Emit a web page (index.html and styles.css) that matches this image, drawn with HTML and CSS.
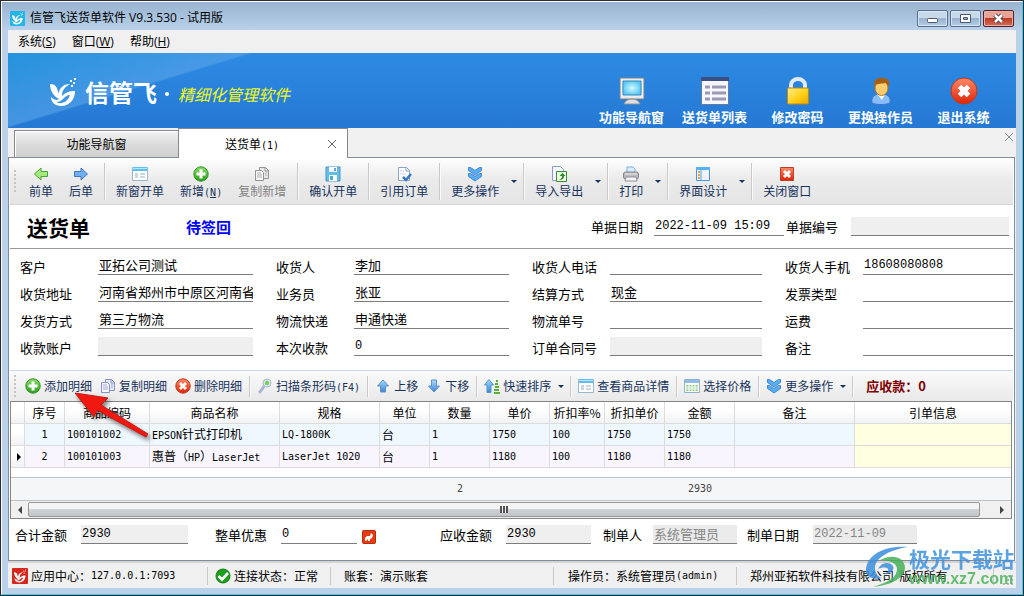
FILE: index.html
```
<!DOCTYPE html>
<html lang="zh-CN">
<head>
<meta charset="utf-8">
<title>信管飞送货单软件 V9.3.530 - 试用版</title>
<link rel="stylesheet" href="styles.css">
</head>
<body>
<svg class="defs" aria-hidden="true">
  <defs>
    <linearGradient id="gGreen" x1="0" y1="0" x2="0" y2="1"><stop offset="0" stop-color="#8ede6a"/><stop offset="1" stop-color="#2a9c1c"/></linearGradient>
    <linearGradient id="gRed" x1="0" y1="0" x2="0" y2="1"><stop offset="0" stop-color="#ff8a68"/><stop offset="1" stop-color="#dc2408"/></linearGradient>
    <linearGradient id="gBlue" x1="0" y1="0" x2="0" y2="1"><stop offset="0" stop-color="#a8dcfc"/><stop offset="1" stop-color="#3d82d0"/></linearGradient>
    <linearGradient id="gGold" x1="0" y1="0" x2="1" y2="1"><stop offset="0" stop-color="#fff08a"/><stop offset=".6" stop-color="#ffcc10"/><stop offset="1" stop-color="#e8a400"/></linearGradient>
    <radialGradient id="gScreen"><stop offset="0" stop-color="#d8fbff"/><stop offset="1" stop-color="#5cc8f8"/></radialGradient>
    <symbol id="bird" viewBox="0 0 26 28">
      <path d="M0 6 C5 6 8 9 8 16 C10 9 14 6 20 6 C15 9 12 12 12 18 C16 14 20 13 25 13 C25 21 20 28 11 28 C5 28 1 24 1 19 C4 22 7 23 9 21 C3 18 0 12 0 6 Z M20 17 C17 17 15 19 13 21 C11 23 9 24 6 24 C11 27 18 24 20 17 Z" fill-rule="evenodd"/>
      <path d="M20 2h2v2h-2zM24 0h2v2h-2zM23 4h2v2h-2zM21 7h2v2h-2z"/>
    </symbol>
    <symbol id="i-add" viewBox="0 0 16 16"><circle cx="8" cy="8" r="7.2" fill="url(#gGreen)" stroke="#2d9424"/><path d="M8 3.5v9M3.5 8h9" stroke="#fff" stroke-width="3"/></symbol>
    <symbol id="i-del" viewBox="0 0 16 16"><circle cx="8" cy="8" r="7.2" fill="url(#gRed)" stroke="#c4381c"/><path d="M5 5l6 6M11 5l-6 6" stroke="#fff" stroke-width="2.8"/></symbol>
    <symbol id="i-left" viewBox="0 0 16 16"><path d="M1.500 8L8 2v3.500h6.500v5H8V14z" fill="#a5e87c" stroke="#4aa336"/></symbol>
    <symbol id="i-right" viewBox="0 0 16 16"><path d="M14.500 8L8 2v3.500H1.500v5H8V14z" fill="#70b0f0" stroke="#4878b8"/></symbol>
    <symbol id="i-up" viewBox="0 0 16 16"><path d="M8 2L13.500 8h-3v6h-5V8h-3z" fill="url(#gBlue)" stroke="#5a94d2"/></symbol>
    <symbol id="i-down" viewBox="0 0 16 16"><path d="M8 14L13.500 8h-3V2h-5v6h-3z" fill="url(#gBlue)" stroke="#5a94d2"/></symbol>
    <symbol id="i-form" viewBox="0 0 16 16"><path d="M.5 1.500h15v13H.5z" fill="#fff" stroke="#92b8d2"/><path d="M1 1h14v4H1z" fill="#5ebff0"/><path d="M1 2h14v1H1z" fill="#b4e6ff"/><path d="M3 7h3v5H3z" fill="#ccd6e2"/><path d="M8 8h5M8 11h5" stroke="#9eaebe"/></symbol>
    <symbol id="i-copy" viewBox="0 0 16 16"><path d="M5.500 1.500h6l3 3v8h-9z" fill="#e4e8fa" stroke="#8793c4"/><path d="M1.500 4.500h6l2 2v8h-8z" fill="#f4f6ff" stroke="#8793c4"/><path d="M3 7h4M3 9h5M3 11h5M11 7h2M11 9h2" stroke="#a4add2"/><path d="M11 1v4h4" fill="none" stroke="#8793c4"/></symbol>
    <symbol id="i-save" viewBox="0 0 16 16"><path d="M1 1h14v14H1z" fill="#62bdea" stroke="#4797c8"/><path d="M4 1h8v5H4zM4 9h8v6H4z" fill="#fff"/><path d="M9 2h2v3H9zM5 10h3v4H5z" fill="#57a8d8"/></symbol>
    <symbol id="i-ref" viewBox="0 0 16 16"><path d="M2.500 1.500h8l3 3v10h-11z" fill="#fbfcff" stroke="#8fa3c8"/><path d="M10 1v4h4" fill="none" stroke="#8fa3c8"/><path d="M4 5h4M4 8h6" stroke="#ccd4e6"/><path d="M7 11l3 3 5-6" fill="none" stroke="#3777c4" stroke-width="2.500"/></symbol>
    <symbol id="i-more" viewBox="0 0 16 16"><path d="M1.500 1.500h2L8 4.500l4.500-3h2v3L8 9 1.500 4.500zM1.500 7.500h2L8 10.500l4.500-3h2v3L8 15 1.500 10.500z" fill="#58adf0" stroke="#4488d2"/></symbol>
    <symbol id="i-export" viewBox="0 0 16 16"><path d="M1.500.5h8l3 3v11h-11z" fill="#f4f7ff" stroke="#8a9cc6"/><path d="M5.500 5.500h10v10h-10z" fill="#effbe8" stroke="#33922e"/><path d="M8 14c3-1 3-3 3-4H8.500L11.500 7l3 3H13c0 3-2 4-5 4z" fill="#259020"/></symbol>
    <symbol id="i-print" viewBox="0 0 16 16"><path d="M4 7V1h6l2 2v4z" fill="#d6edff" stroke="#7eb4e2"/><rect x=".5" y="6" width="15" height="7" rx="2" fill="#b8b8bc" stroke="#85858b"/><path d="M2 8h12" stroke="#efefef"/><path d="M3 11h10l1 4H2z" fill="#f5f5f5" stroke="#929298"/></symbol>
    <symbol id="i-design" viewBox="0 0 16 16"><path d="M1.500 1.500h13v13h-13z" fill="#f1f1ff" stroke="#3a9be8"/><path d="M1 1h14v3H1z" fill="#55b2f5"/><path d="M6 4v10" stroke="#48a4ec"/><path d="M3 5h2v2H3zM3 8h2v2H3zM3 11h2v2H3z" fill="#eda338"/></symbol>
    <symbol id="i-close" viewBox="0 0 16 16"><path d="M1.500 1.500h13v13h-13z" fill="url(#gRed)" stroke="#bd3e25"/><path d="M5 5l6 6M11 5l-6 6" stroke="#fff" stroke-width="3"/></symbol>
    <symbol id="i-scan" viewBox="0 0 16 16"><path d="M3 14l5-7" stroke="#a9b3d2" stroke-width="3" stroke-linecap="round"/><circle cx="10" cy="5" r="4" fill="#dce8f4" stroke="#a9b9d4"/><circle cx="10" cy="5" r="2.200" fill="#7bd04c"/></symbol>
    <symbol id="i-sort" viewBox="0 0 16 16"><path d="M5 1.500L9.500 7H7v7.500H3V7H.5z" fill="url(#gBlue)" stroke="#4a9ad8"/><path d="M12 3h2M11 6h3M11 9h4M10 12h5M10 15h6" stroke="#57b038" stroke-width="2"/></symbol>
    <symbol id="i-price" viewBox="0 0 16 16"><path d="M.5 1.500h15v13H.5z" fill="#fff" stroke="#8fb2cc"/><path d="M1 2h14v3H1z" fill="#8fbfe6"/><path d="M2 7h12v6H2z" fill="#94cc80"/><path d="M2 9h12M2 11h12M5 7v6M8 7v6M11 7v6" stroke="#fff"/></symbol>
    <symbol id="i-ok" viewBox="0 0 16 16"><circle cx="8" cy="8" r="7" fill="#19a01c" stroke="#117d14"/><path d="M3.500 8l3.500 3.500 6-6.500" fill="none" stroke="#fff" stroke-width="2.600"/></symbol>
  </defs>
</svg>

<div class="window">
  <div class="frame">
    <header class="titlebar">
      <svg class="app-icon" viewBox="0 0 16 16"><rect width="16" height="16" rx="1" fill="#22b5ea"/><use href="#bird" x="2" y="1" width="12" height="14" fill="#fff"/></svg>
      <h1 class="caption">信管飞送货单软件 V9.3.530 - 试用版</h1>
      <div class="window-buttons">
        <button class="wbtn" aria-label="最小化"><svg viewBox="0 0 31 17"><rect x="10.500" y="8.500" width="10" height="4" rx="1" fill="#fff" stroke="#4b5870"/></svg></button>
        <button class="wbtn" aria-label="还原"><svg viewBox="0 0 31 17"><path d="M10.500 4.500h10v8h-10zM13.500 7.500h4v2h-4z" fill="#fff" fill-rule="evenodd" stroke="#4b5870"/></svg></button>
        <button class="wbtn wbtn-close" aria-label="关闭"><svg viewBox="0 0 31 17"><path d="M12 5l7 7M19 5l-7 7" stroke="#4b4552" stroke-width="4.500"/><path d="M12 5l7 7M19 5l-7 7" stroke="#fff" stroke-width="2.500"/></svg></button>
      </div>
    </header>

    <div class="client">
      <nav class="menubar">
        <button class="menu-item">系统(<u>S</u>)</button>
        <button class="menu-item">窗口(<u>W</u>)</button>
        <button class="menu-item">帮助(<u>H</u>)</button>
      </nav>

      <div class="banner">
        <div class="brand">
          <svg class="brand-mark"><use href="#bird" fill="#fff"/></svg>
          <span class="brand-name">信管飞</span>
          <span class="brand-dot"></span>
          <span class="brand-slogan">精细化管理软件</span>
        </div>
        <nav class="shortcuts">
          <button class="shortcut"><svg viewBox="0 0 28 28"><path d="M2 1h24v21H2z" fill="#ececec" stroke="#77828a"/><path d="M5 4h18v14H5z" fill="url(#gScreen)" stroke="#3288bd"/><path d="M6 27c1-3 4-5 8-5s7 2 8 5z" fill="#e0e0e0" stroke="#929292"/></svg>功能导航窗</button>
          <button class="shortcut"><svg viewBox="0 0 28 28"><path d="M.5.500h27v27H.500z" fill="#f6f6fd" stroke="#66789e"/><path d="M0 0h28v4H0z" fill="#3d4f80"/><path d="M4 10h5M4 16h5M4 22h5M11 10h14M11 16h14M11 22h14" stroke="#9a9ab6" stroke-width="3"/></svg>送货单列表</button>
          <button class="shortcut"><svg viewBox="0 0 28 28"><path d="M7 12V8a7 6 0 0 1 14 0v4" fill="none" stroke="#e4eaf8" stroke-width="4"/><rect x="3.500" y="11" width="21" height="16" rx="1" fill="url(#gGold)" stroke="#b98b12"/></svg>修改密码</button>
          <button class="shortcut"><svg viewBox="0 0 28 28"><path d="M5 26c-1-6 2-8 6-9h6c4 1 7 3 6 9-4 2-14 2-18 0z" fill="#88bcf8" stroke="#3a74cc"/><path d="M10 17l5 6 3-6z" fill="#fff"/><ellipse cx="14.500" cy="11" rx="6.500" ry="7.500" fill="#ffcd70" stroke="#b87422"/><path d="M7 9C6 2 12 0 16 1c6 0 7 4 6 8-2-1-2-2-3-3-4 1-9 0-12 3z" fill="#a55f14"/></svg>更换操作员</button>
          <button class="shortcut"><svg viewBox="0 0 28 28"><circle cx="14" cy="14" r="13" fill="url(#gRed)" stroke="#c43818"/><path d="M9.500 9.500l9 9M18.500 9.500l-9 9" stroke="#fff" stroke-width="5"/></svg>退出系统</button>
        </nav>
      </div>

      <div class="tabs">
        <button class="tab">功能导航窗</button>
        <div class="tab tab-active"><button class="tab-label">送货单<span class="mono">(1)</span></button><button class="x" aria-label="关闭标签"><svg viewBox="0 0 8 8"><path d="M0 0l8 8M8 0L0 8"/></svg></button></div>
        <button class="x x-all" aria-label="关闭"><svg viewBox="0 0 8 8"><path d="M0 0l8 8M8 0L0 8"/></svg></button>
      </div>

      <main class="sheet">
        <div class="toolbar toolbar-main">
          <span class="grip"></span>
          <button class="tool"><svg><use href="#i-left"/></svg>前单</button>
          <button class="tool"><svg><use href="#i-right"/></svg>后单</button>
          <span class="sep"></span>
          <button class="tool"><svg><use href="#i-form"/></svg>新窗开单</button>
          <button class="tool"><svg><use href="#i-add"/></svg><span>新增<span class="mono">(<u>N</u>)</span></span></button>
          <button class="tool" disabled><svg><use href="#i-copy"/></svg>复制新增</button>
          <span class="sep"></span>
          <button class="tool"><svg><use href="#i-save"/></svg>确认开单</button>
          <span class="sep"></span>
          <button class="tool"><svg><use href="#i-ref"/></svg>引用订单</button>
          <span class="sep"></span>
          <button class="tool"><svg><use href="#i-more"/></svg>更多操作</button><button class="drop" aria-label="更多操作选项"></button>
          <span class="sep"></span>
          <button class="tool"><svg><use href="#i-export"/></svg>导入导出</button><button class="drop" aria-label="导入导出选项"></button>
          <span class="sep"></span>
          <button class="tool"><svg><use href="#i-print"/></svg>打印</button><button class="drop" aria-label="打印选项"></button>
          <span class="sep"></span>
          <button class="tool"><svg><use href="#i-design"/></svg>界面设计</button><button class="drop" aria-label="界面设计选项"></button>
          <span class="sep"></span>
          <button class="tool"><svg><use href="#i-close"/></svg>关闭窗口</button>
        </div>

        <div class="doc-head">
          <h2 class="doc-title">送货单</h2>
          <strong class="doc-state">待签回</strong>
          <label for="f-date">单据日期</label>
          <input id="f-date" class="field latin w-date" value="2022-11-09 15:09">
          <label for="f-no">单据编号</label>
          <input id="f-no" class="field w-no" readonly>
        </div>

        <form class="doc-form">
          <div class="pair"><label for="a1">客户</label><input id="a1" class="field" value="亚拓公司测试"></div>
          <div class="pair"><label for="a2">收货人</label><input id="a2" class="field" value="李加"></div>
          <div class="pair"><label for="a3">收货人电话</label><input id="a3" class="field"></div>
          <div class="pair"><label for="a4">收货人手机</label><input id="a4" class="field latin" value="18608080808"></div>
          <div class="pair"><label for="b1">收货地址</label><input id="b1" class="field" value="河南省郑州市中原区河南省"></div>
          <div class="pair"><label for="b2">业务员</label><input id="b2" class="field" value="张亚"></div>
          <div class="pair"><label for="b3">结算方式</label><input id="b3" class="field" value="现金"></div>
          <div class="pair"><label for="b4">发票类型</label><input id="b4" class="field"></div>
          <div class="pair"><label for="c1">发货方式</label><input id="c1" class="field" value="第三方物流"></div>
          <div class="pair"><label for="c2">物流快递</label><input id="c2" class="field" value="申通快递"></div>
          <div class="pair"><label for="c3">物流单号</label><input id="c3" class="field"></div>
          <div class="pair"><label for="c4">运费</label><input id="c4" class="field"></div>
          <div class="pair"><label for="d1">收款账户</label><input id="d1" class="field" readonly></div>
          <div class="pair"><label for="d2">本次收款</label><input id="d2" class="field latin" value="0"></div>
          <div class="pair"><label for="d3">订单合同号</label><input id="d3" class="field" readonly></div>
          <div class="pair"><label for="d4">备注</label><input id="d4" class="field"></div>
        </form>

        <div class="toolbar toolbar-rows">
          <span class="grip"></span>
          <button class="tool"><svg><use href="#i-add"/></svg>添加明细</button>
          <button class="tool"><svg><use href="#i-copy"/></svg>复制明细</button>
          <button class="tool"><svg><use href="#i-del"/></svg>删除明细</button>
          <span class="sep"></span>
          <button class="tool"><svg><use href="#i-scan"/></svg><span>扫描条形码<span class="mono">(F4)</span></span></button>
          <span class="sep"></span>
          <button class="tool"><svg><use href="#i-up"/></svg>上移</button>
          <button class="tool"><svg><use href="#i-down"/></svg>下移</button>
          <span class="sep"></span>
          <button class="tool"><svg><use href="#i-sort"/></svg>快速排序</button><button class="drop" aria-label="排序选项"></button>
          <span class="sep"></span>
          <button class="tool"><svg><use href="#i-form"/></svg>查看商品详情</button>
          <span class="sep"></span>
          <button class="tool"><svg><use href="#i-price"/></svg>选择价格</button>
          <span class="sep"></span>
          <button class="tool"><svg><use href="#i-more"/></svg>更多操作</button><button class="drop" aria-label="明细更多操作"></button>
          <span class="sep"></span>
          <strong class="due">应收款：0</strong>
        </div>

        <div class="grid">
          <table>
            <colgroup><col class="c14"><col class="c40"><col class="c85"><col class="c130"><col class="c100"><col class="c50"><col class="c60"><col class="c60"><col class="c55"><col class="c60"><col class="c70"><col class="c120"><col></colgroup>
            <thead><tr><th></th><th>序号</th><th>商品编码</th><th>商品名称</th><th>规格</th><th>单位</th><th>数量</th><th>单价</th><th>折扣率%</th><th>折扣单价</th><th>金额</th><th>备注</th><th>引单信息</th></tr></thead>
            <tbody>
              <tr class="odd"><td class="mark"></td><td class="mid">1</td><td>100101002</td><td>EPSON<span class="cjk">针式打印机</span></td><td>LQ-1800K</td><td class="cjk">台</td><td>1</td><td>1750</td><td>100</td><td>1750</td><td>1750</td><td></td><td class="ref"></td></tr>
              <tr class="even"><td class="mark"><span class="pointer"></span></td><td class="mid">2</td><td>100101003</td><td><span class="cjk">惠普（</span>HP<span class="cjk">）</span>LaserJet</td><td>LaserJet 1020</td><td class="cjk">台</td><td>1</td><td>1180</td><td>100</td><td>1180</td><td>1180</td><td></td><td class="ref"></td></tr>
            </tbody>
          </table>
          <div class="grid-space"></div>
          <table class="totals">
            <colgroup><col class="c14"><col class="c40"><col class="c85"><col class="c130"><col class="c100"><col class="c50"><col class="c60"><col class="c60"><col class="c55"><col class="c60"><col class="c70"><col class="c120"><col></colgroup>
            <tbody><tr><td></td><td></td><td></td><td></td><td></td><td></td><td class="mid">2</td><td></td><td></td><td></td><td class="mid">2930</td><td></td><td></td></tr></tbody>
          </table>
          <div class="scroll">
            <button class="scroll-arrow" aria-label="向左"><svg viewBox="0 0 4 8"><path d="M4 0v8L0 4z"/></svg></button>
            <div class="thumb"><span class="ribs"></span></div>
            <button class="scroll-arrow scroll-right" aria-label="向右"><svg viewBox="0 0 4 8"><path d="M0 0v8l4-4z"/></svg></button>
          </div>
        </div>

        <div class="doc-foot">
          <div class="slot s1"><label for="e1">合计金额</label><input id="e1" class="field latin" value="2930" readonly></div>
          <div class="slot s2"><label for="e2">整单优惠</label><input id="e2" class="field latin" value="0"></div>
          <button class="fix" aria-label="优惠设置"><svg viewBox="0 0 14 14"><rect x=".5" y=".5" width="13" height="13" rx="1" fill="#e43d14" stroke="#b72a0c"/><path d="M3 11V8l2-2h3l1-3 2 2-1 3-2 1v2H6V9L4 11z" fill="#fff"/></svg></button>
          <div class="slot s3"><label for="e3">应收金额</label><input id="e3" class="field latin" value="2930" readonly></div>
          <div class="slot s4"><label for="e4">制单人</label><input id="e4" class="field" value="系统管理员" disabled></div>
          <div class="slot s5"><label for="e5">制单日期</label><input id="e5" class="field latin" value="2022-11-09" disabled></div>
        </div>
      </main>

      <footer class="status">
        <div class="cell st1"><svg viewBox="0 0 16 16"><rect width="16" height="16" rx="1" fill="#d8261c"/><use href="#bird" x="2" y="1" width="12" height="14" fill="#fff"/></svg>应用中心：<span class="mono">127.0.0.1:7093</span></div>
        <div class="cell st2"><svg><use href="#i-ok"/></svg>连接状态：正常</div>
        <div class="cell st3">账套：演示账套</div>
        <div class="cell st4">操作员：系统管理员<span class="mono">(admin)</span></div>
        <div class="cell st5">郑州亚拓软件科技有限公司&nbsp; 版权所有</div>
        <svg class="size-grip" viewBox="0 0 11 11"><path d="M8 0h2v2H8zM4 4h2v2H4zM8 4h2v2H8zM0 8h2v2H0zM4 8h2v2H4zM8 8h2v2H8z" fill="#b4b4b4"/></svg>
      </footer>
    </div>
  </div>

  <svg class="pointer-arrow" viewBox="0 0 90 60" aria-hidden="true"><path d="M5 7L38 12 31 19 78 48 76 51 27 24 24 31z" fill="#f01810" stroke="#c01c18"/></svg>

  <div class="watermark">
    <svg viewBox="0 0 44 42"><path d="M1 26C0 10 18-1 43 1 24 4 10 12 10 22c0 5 3 9 7 10C8 34 2 31 1 26z" fill="#3c8fdc"/><path d="M15 14c11-6 24-4 25 7 0 11-13 18-32 20 16-5 24-10 24-18 0-6-8-9-17-9z" fill="#46b05a"/><path d="M13 23c3-7 12-8 15-3 2 5-4 9-10 8 4-1 6-3 5-5s-6-2-10 0z" fill="#3c8fdc"/></svg>
    <div class="wm-text"><span class="wm-name">极光下载站</span><span class="wm-url">www.xz7.com</span></div>
  </div>
</div>
</body>
</html>
```
FILE: styles.css
```
* { box-sizing: border-box; }

body {
  margin: 0;
  font-family: "Noto Sans CJK SC", sans-serif;
  font-size: 12px;
  line-height: 16px;
  color: #000;
}

button {
  margin: 0;
  padding: 0;
  border: 0;
  background: none;
  font: inherit;
  color: inherit;
  white-space: nowrap;
}

svg { display: block; flex: none; }
.defs { position: absolute; width: 0; height: 0; }
.mono { font-family: "DejaVu Sans Mono", monospace; font-size: 10px; line-height: 1; }

/* window frame */
.window {
  position: relative;
  display: flex;
  min-height: 100vh;
  overflow: hidden;
  border: 1px solid #2c2b33;
  background: #b9d1ea;
}
.frame {
  flex: 1;
  min-width: 0;
  display: flex;
  flex-direction: column;
  padding: 0 6px 6px;
  border: 1px solid #fff;
  border-right-color: #35cdf0;
  border-bottom-color: #35cdf0;
  background: linear-gradient(#98b3d0, #b9d1ea 28px);
}
.titlebar {
  display: flex;
  align-items: center;
  gap: 5px;
  height: 28px;
  padding: 4px 2px 0;
}
.app-icon { width: 15px; height: 15px; }
.caption { flex: 1; margin: 0; font-size: 12px; font-weight: 400; }
.caption, .menubar { font-family: "Open Sans", "Noto Sans CJK SC", sans-serif; }
.window-buttons { display: flex; gap: 2px; margin-top: 1px; }
.wbtn {
  width: 31px;
  height: 17px;
  border: 1px solid #5b6f8c;
  border-radius: 2px;
  background: linear-gradient(#c8d9ea 48%, #98b2cf 50%, #b6cee6);
  box-shadow: inset 0 0 0 1px #d6e5f3;
}
.wbtn svg { width: 31px; height: 17px; margin: -1px; }
.wbtn-close {
  border-color: #5a1e22;
  background: linear-gradient(#e5a496 46%, #bc3a23 50%, #d2705a);
  box-shadow: inset 0 0 0 1px #e8b0a4;
}
.client {
  flex: 1;
  display: flex;
  flex-direction: column;
  background: #f0f0f0;
}
.menubar { display: flex; gap: 16px; height: 23px; padding: 0 10px; align-items: center; }

/* banner */
.banner {
  display: flex;
  justify-content: space-between;
  height: 75px;
  padding: 0 11px 0 42px;
  background:
    linear-gradient(163deg, rgba(32, 150, 220, .7), rgba(90, 165, 232, .6) 70px, transparent 72px),
    linear-gradient(#2d8be3, #2578d4);
}
.brand { display: flex; align-items: center; padding-top: 3px; color: #fff; }
.brand-mark { width: 26px; height: 28px; margin-right: 9px; }
.brand-name { font-size: 24px; font-weight: 700; line-height: 30px; }
.brand-dot { width: 4px; height: 4px; margin: 4px 9px 0 8px; border-radius: 50%; background: #fff; }
.brand-slogan { padding-top: 4px; font-size: 16px; font-style: italic; line-height: 24px; color: #f2f916; }
.shortcuts { display: flex; padding-top: 24px; }
.shortcut {
  display: flex;
  flex-direction: column;
  align-items: center;
  gap: 4px;
  width: 83px;
  font-size: 13px;
  font-weight: 700;
  color: #fff;
}
.shortcut svg { width: 28px; height: 28px; }

/* tabs */
.tabs { display: flex; align-items: flex-end; height: 29px; padding-left: 6px; }
.tab {
  width: 165px;
  height: 27px;
  border: 1px solid #868992;
  border-width: 1px 1px 0;
  background: linear-gradient(#f3f3f3, #dcdcdc 50%, #d0d0d0);
  box-shadow: inset 1px 1px #fff;
}
.tab-active {
  display: flex;
  align-items: center;
  justify-content: space-between;
  width: 170px;
  height: 30px;
  margin: 0 0 -1px -1px;
  padding: 0 11px 0 46px;
  background: #fff;
  z-index: 1;
}
.x svg { width: 8px; height: 8px; stroke: #5f6068; fill: none; }
.x-all { align-self: flex-start; margin: 5px 3px 0 auto; }
.x-all svg { stroke: #8790a4; }

/* document sheet */
.sheet {
  flex: 1;
  display: flex;
  flex-direction: column;
  margin-right: 1px;
  padding: 0 1px;
  border: 1px solid #868b98;
  background: #fff;
}
.toolbar { display: flex; align-items: center; padding-left: 4px; color: #17335c; }
.toolbar-main {
  height: 47px;
  border-bottom: 1px solid #d5d5d5;
  background: linear-gradient(#fff, #ebebeb 45%, #e5e5e5);
}
.toolbar-rows {
  height: 31px;
  margin-top: 14px;
  border-top: 1px solid #c9d9e6;
  background: linear-gradient(#fafafa, #e9e9e9);
}
.grip {
  width: 2px;
  height: 22px;
  margin-right: 5px;
  background: repeating-linear-gradient(#c3c3c3 0 2px, transparent 2px 4px);
}
.sep { width: 1px; height: 37px; margin: 0 3px; background: #c9c9c9; box-shadow: 1px 0 #fafafa; }
.tool { display: flex; align-items: center; }
.tool svg { width: 16px; height: 16px; }
.toolbar-main .tool { flex-direction: column; gap: 1px; padding: 3px 8px 0; }
.toolbar-rows .tool { gap: 3px; padding: 0 4px; }
.toolbar-rows .sep { height: 21px; }
.toolbar-rows .drop { width: 12px; }
.tool:disabled { color: #848484; }
.tool:disabled svg { filter: grayscale(1); }
.drop { display: flex; justify-content: center; width: 13px; }
.drop::after { content: ""; border: 3px solid transparent; border-top-color: #17335c; border-bottom: 0; }
.due { margin-left: 10px; font-size: 13px; color: #800000; }

label { flex: none; font-size: 13px; }
.field {
  min-width: 0;
  height: 19px;
  padding: 0 0 1px 1px;
  border: 0;
  border-bottom: 1px solid #7c7c7c;
  border-radius: 0;
  outline: 0;
  background: #fff;
  font-family: "Noto Sans CJK SC", sans-serif;
  font-size: 13px;
  color: #000;
}
.latin { font-family: "Liberation Mono", monospace; font-size: 12px; }
.field:read-only { background: #efefef; }
.field:disabled { background: #ebebeb; color: #858585; }

.doc-head {
  display: flex;
  align-items: center;
  height: 44px;
  padding: 0 4px 0 17px;
  border-bottom: 1px solid #999;
}
.doc-title { flex: none; width: 159px; margin: 0; font-size: 21px; font-weight: 700; line-height: 28px; }
.doc-state { flex: 1; font-size: 15px; color: #0000f8; }
.w-date { width: 130px; margin: 0 2px 0 11px; }
.w-no { width: 158px; margin-left: 13px; }

.doc-form {
  display: grid;
  grid-template-columns: 233fr 233fr 230fr 228fr;
  gap: 8px 23px;
  margin: 7px 0 0;
  padding-left: 10px;
}
.pair { display: grid; grid-template-columns: 78px minmax(0, 1fr); align-items: end; }
.pair label { line-height: 16px; }

/* detail grid */
.grid {
  flex: 1;
  display: flex;
  flex-direction: column;
  border: 1px solid #858585;
  margin-right: 1px;
}
table { width: 100%; table-layout: fixed; border-collapse: separate; border-spacing: 0; }
th, td {
  height: 22px;
  padding: 0 2px;
  overflow: hidden;
  border-right: 1px solid #dcdcdc;
  border-bottom: 1px solid #dcdcdc;
  text-align: left;
  white-space: nowrap;
  line-height: 16px;
}
th {
  padding: 0;
  font-weight: 400;
  text-align: center;
  background: linear-gradient(#fff 40%, #f1f2f4);
}
td { font-family: "DejaVu Sans Mono", monospace; font-size: 10px; }
th:last-child, td:last-child { border-right: 0; }
.cjk { font-family: "Noto Sans CJK SC", sans-serif; font-size: 12px; }
.odd td { background: #f0f8ff; }
.even td { background: #f8f5ff; }
.odd .ref, .even .ref { background: #ffffe1; }
.odd .mark, .even .mark { background: linear-gradient(#fff 40%, #f1f2f4); }
.mid { text-align: center; }
.pointer { display: block; width: 0; margin-left: 4px; border: 4px solid transparent; border-left-color: #000; border-right: 0; }
.c14 { width: 14px; } .c40 { width: 40px; } .c50 { width: 50px; } .c55 { width: 55px; }
.c60 { width: 60px; } .c70 { width: 70px; } .c85 { width: 85px; } .c100 { width: 100px; }
.c120 { width: 120px; } .c130 { width: 130px; }
.grid-space { flex: 1; }
.totals { border-top: 1px solid #bfc1c4; background: #f5f6f8; color: #444; }
.totals td { height: 23px; border-right: 0; border-bottom-color: #bfc1c4; }
.scroll { display: flex; height: 17px; background: #f0f0f0; padding: 1px 0; }
.scroll-arrow { display: flex; align-items: center; justify-content: center; width: 17px; }
.scroll-arrow svg { width: 4px; height: 8px; fill: #444; }
.scroll-right { width: 31px; padding-left: 12px; }
.thumb {
  flex: 1;
  display: flex;
  align-items: center;
  justify-content: center;
  border: 1px solid #979797;
  border-radius: 2px;
  background: linear-gradient(#f4f4f4 45%, #d0d1d5 50%, #c3c5ca);
}
.ribs { width: 8px; height: 7px; background: repeating-linear-gradient(90deg, #555 0 2px, #e8e8e8 2px 3px); }

.doc-foot { display: flex; height: 41px; padding: 6px 0 0 5px; }
.slot { display: flex; align-items: flex-start; gap: 14px; }
.slot label { margin-top: 2px; }
.slot .field { flex: 1; }
.s1 { width: 173px; margin-right: 27px; }
.s2 { width: 142px; }
.s3 { width: 151px; margin-right: 12px; }
.s4 { width: 134px; margin-right: 10px; gap: 11px; }
.s5 { width: 170px; }
.fix { align-self: flex-start; margin: 5px 64px 0 5px; }
.fix svg { width: 14px; height: 14px; }

/* status bar */
.status {
  display: flex;
  align-items: center;
  height: 27px;
  border-top: 2px solid #d4d4d4;
  background: #f0f0f0;
}
.cell { display: flex; align-items: center; gap: 3px; height: 18px; border-right: 1px solid #c8c8c8; white-space: nowrap; }
.cell svg { width: 16px; height: 16px; }
.cell .mono { margin-left: -3px; }
.st1 { width: 200px; padding-left: 4px; }
.st2 { width: 123px; padding-left: 7px; }
.st3 { width: 223px; padding-left: 13px; }
.st4 { width: 183px; padding-left: 14px; }
.st5 { flex: 1; margin-right: 9px; padding-left: 13px; }
.size-grip { align-self: flex-end; width: 11px; height: 11px; margin: 0 2px 2px 0; }

/* overlays */
.pointer-arrow {
  position: absolute;
  left: 69px;
  top: 385px;
  width: 90px;
  height: 60px;
  filter: drop-shadow(2px 3px 2px rgba(0, 0, 0, .5));
}
.watermark { position: absolute; right: 9px; bottom: 7px; display: flex; align-items: center; opacity: .85; }
.watermark svg { width: 44px; height: 42px; }
.wm-text { display: flex; flex-direction: column; }
.wm-name { font-size: 21px; font-weight: 700; line-height: 24px; color: #3f93de; }
.wm-url { font-family: "Liberation Sans", sans-serif; font-size: 16px; font-weight: 700; line-height: 18px; color: #4cb45c; }
```
